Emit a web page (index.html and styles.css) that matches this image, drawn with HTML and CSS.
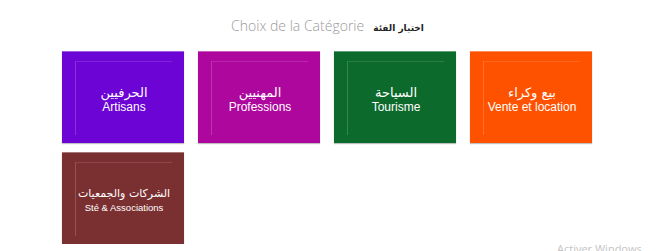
FILE: index.html
```html
<!DOCTYPE html>
<html lang="fr">
<head>
<meta charset="UTF-8">
<meta name="viewport" content="width=device-width, initial-scale=1.0">
<title>Choix de la Catégorie</title>
<link rel="stylesheet" href="styles.css">
</head>
<body>

<div class="page">
    <h2 class="title">
        <span class="title-fr">Choix de la Catégorie</span>
        <span class="title-ar" lang="ar">اختيار الفئة</span>
    </h2>

    <div class="grid">
        <a class="tile artisans" href="#">
            <span class="frame">
                <span class="ar" lang="ar">الحرفيين</span>
                <span class="fr">Artisans</span>
            </span>
        </a>
        <a class="tile professions" href="#">
            <span class="frame">
                <span class="ar" lang="ar">المهنيين</span>
                <span class="fr">Professions</span>
            </span>
        </a>
        <a class="tile tourisme" href="#">
            <span class="frame">
                <span class="ar" lang="ar">السياحة</span>
                <span class="fr">Tourisme</span>
            </span>
        </a>
        <a class="tile vente" href="#">
            <span class="frame">
                <span class="ar" lang="ar">بيع وكراء</span>
                <span class="fr">Vente et location</span>
            </span>
        </a>
        <a class="tile societes" href="#">
            <span class="frame">
                <span class="ar" lang="ar">الشركات والجمعيات</span>
                <span class="fr">Sté &amp; Associations</span>
            </span>
        </a>
    </div>
</div>

<div class="watermark">Activer Windows</div>

</body>
</html>
```

FILE: styles.css
```css
body {
    margin: 0;
    background: #fff;
    font-family: "Liberation Sans", Arial, sans-serif;
    overflow: hidden;
}

.page {
    padding: 16px 0 0 62px;
    width: 531px;
}

.title {
    margin: 0 0 16px;
    font-weight: normal;
    display: flex;
    justify-content: center;
    align-items: baseline;
    gap: 9px;
    height: 19px;
}

.title-fr {
    font-family: "Open Sans", sans-serif;
    font-weight: 300;
    font-size: 14px;
    color: #9a9a9a;
}

.title-ar {
    font-family: "DejaVu Sans", sans-serif;
    font-weight: bold;
    font-size: 9px;
    color: #222;
}

.grid {
    display: grid;
    grid-template-columns: repeat(4, 122px);
    grid-auto-rows: 92px;
    column-gap: 14px;
    row-gap: 9px;
}

.tile {
    display: block;
    text-decoration: none;
    color: #fff;
    padding: 9px 12px 8px 14px;
    border-top: 1px solid rgba(255, 255, 255, 0.35);
    box-shadow: 0 1px 1px rgba(0, 0, 0, 0.25);
}

.frame {
    height: 100%;
    border-left: 1px solid rgba(255, 255, 255, 0.18);
    border-top: 1px solid rgba(255, 255, 255, 0.12);
    display: flex;
    flex-direction: column;
    justify-content: center;
    align-items: center;
    box-sizing: border-box;
    margin-left: -1px;
    padding-top: 2px;
}

.ar {
    font-family: "DejaVu Sans", sans-serif;
    font-size: 13px;
    line-height: 14px;
}

.fr {
    font-size: 12px;
    line-height: 14px;
}

.societes .ar {
    font-size: 11px;
}

.societes .fr {
    font-size: 9.5px;
    line-height: 13px;
}

.artisans { background: #6c04d6; }
.professions { background: #ae079e; }
.tourisme { background: #0c6a2c; }
.vente { background: #ff5200; }
.societes { background: #7a2f31; }

.watermark {
    position: absolute;
    left: 557px;
    top: 241px;
    font-family: "Open Sans", sans-serif;
    font-size: 11px;
    color: #c4c4c4;
}
```
